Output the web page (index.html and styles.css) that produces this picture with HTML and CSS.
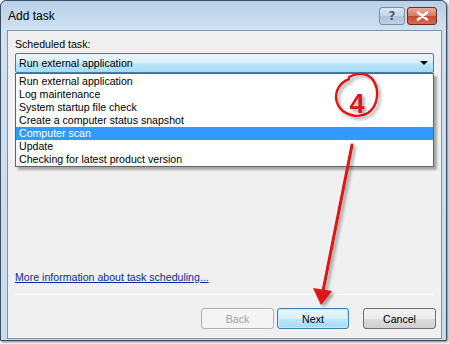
FILE: index.html
```html
<!DOCTYPE html>
<html lang="en">
<head>
  <meta charset="UTF-8" />
  <title>Add task</title>
  <link rel="stylesheet" href="styles.css">
</head>
<body>

  <div class="window" role="dialog" aria-label="Add task">
    <div class="titlebar">
      <span class="title">Add task</span>
      <button class="cap-btn help" aria-label="Help">?</button>
      <button class="cap-btn close" aria-label="Close">
        <svg width="13" height="10" viewBox="0 0 13 10"><path d="M2 1.5 L11 8.5 M11 1.5 L2 8.5" stroke="#fff" stroke-width="2.6" stroke-linecap="round"/></svg>
      </button>
    </div>

    <div class="client">
      <div class="label">Scheduled task:</div>
      <div class="combo-wrap">
        <div class="combo">
          <span>Run external application</span>
          <span class="arrow"></span>
        </div>
        <ul class="dropdown">
          <li>Run external application</li>
          <li>Log maintenance</li>
          <li>System startup file check</li>
          <li>Create a computer status snapshot</li>
          <li class="selected">Computer scan</li>
          <li>Update</li>
          <li>Checking for latest product version</li>
        </ul>
      </div>

      <div class="spacer"></div>

      <a href="#" class="info-link">More information about task scheduling...</a>
      <div class="separator"></div>

      <div class="buttons">
        <button class="btn back" disabled>Back</button>
        <button class="btn next">Next</button>
        <button class="btn cancel">Cancel</button>
      </div>
    </div>
  </div>

  <!-- step marker drawn over the dialog -->
  <svg class="annotation" width="449" height="344" viewBox="0 0 449 344">
    <defs>
      <filter id="shade" x="-20%" y="-20%" width="140%" height="140%">
        <feDropShadow dx="2.5" dy="2.5" stdDeviation="1.5" flood-color="#000" flood-opacity="0.35"/>
      </filter>
    </defs>
    <g filter="url(#shade)" fill="none" stroke="#e01212" stroke-linecap="round">
      <path d="M349 77 C358 72 368 73 373 80 C380 90 378 106 368 113 C358 119 343 115 338 105 C333 95 338 83 349 79" stroke-width="2.4"/>
      <path d="M352 145 L323 291" stroke-width="3"/>
    </g>
    <g filter="url(#shade)">
      <polygon points="321,305 313,288 332,291" fill="#e01212"/>
      <text x="357" y="113" class="step">4</text>
    </g>
  </svg>

</body>
</html>
```

FILE: styles.css
```css
* {
  box-sizing: border-box;
}

body {
  margin: 0;
  background: #ffffff;
  font-family: 'Liberation Sans', Arial, sans-serif;
  font-size: 10.6px;
  color: #000;
  position: relative;
  width: 449px;
  height: 344px;
  overflow: hidden;
}

.window {
  width: 447px;
  height: 341px;
  border: 1px solid #3b4d63;
  border-radius: 6px 6px 0 0;
  background: linear-gradient(to bottom, #b9d0e8, #cfe0f1 28px, #c6daee);
  padding: 0 4px 1px 6px;
  display: flex;
  flex-direction: column;
  box-shadow: 1px 1px 3px rgba(0, 0, 0, 0.55);
}

/* Title bar */
.titlebar {
  height: 29px;
  display: flex;
  align-items: flex-start;
}

.title {
  font-size: 12px;
  padding: 8px 0 0 1px;
  color: #000;
  flex: 1;
}

.cap-btn {
  margin-top: 6px;
  height: 18px;
  border-radius: 3px;
  padding: 0;
  display: flex;
  justify-content: center;
  align-items: center;
}

.help {
  width: 26px;
  border: 1px solid #7b8ea6;
  background: linear-gradient(to bottom, #dbe6f2, #c4d5e8 50%, #aec2d9 51%, #bdd0e4);
  color: #4f5f74;
  font-family: 'DejaVu Sans', sans-serif;
  font-size: 12px;
  font-weight: bold;
}

.close {
  width: 30px;
  margin-left: 2px;
  margin-right: 5px;
  border: 1px solid #6a2a22;
  background: linear-gradient(to bottom, #e9a99b, #d87a65 50%, #c44a33 51%, #d86a4e);
}

/* Client area */
.client {
  flex: 1;
  border: 1px solid #7f94ab;
  background: #f0f0f0;
  padding: 7px 7px 9px;
  display: flex;
  flex-direction: column;
}

.label {
  height: 13px;
  line-height: 13px;
  margin-bottom: 2px;
}

.combo-wrap {
  position: relative;
}

.combo {
  height: 20px;
  border: 1px solid #3c7fb1;
  border-radius: 2px;
  background: linear-gradient(to bottom, #eaf6fd, #d9f0fc 50%, #bee6fd 51%, #a7d9f5);
  display: flex;
  align-items: center;
  padding: 0 3px;
}

.combo span:first-child {
  flex: 1;
}

.arrow {
  width: 0;
  height: 0;
  border-left: 4px solid transparent;
  border-right: 4px solid transparent;
  border-top: 4px solid #000;
  margin-right: 2px;
}

/* Open list, lies over the dialog */
.dropdown {
  position: absolute;
  top: 100%;
  left: 0;
  right: 0;
  margin: 0;
  padding: 1px 0 0;
  list-style: none;
  background: #ffffff;
  border: 1px solid #646464;
  box-shadow: 3px 3px 2px rgba(0, 0, 0, 0.3);
}

.dropdown li {
  height: 13px;
  line-height: 13px;
  padding: 0 3px;
}

.dropdown li.selected {
  background: #3399ff;
  color: #ffffff;
}

.spacer {
  flex: 1;
}

.info-link {
  color: #0b2d99;
  text-decoration: underline;
  line-height: 13px;
  align-self: flex-start;
}

.separator {
  height: 1px;
  background: #a0a0a0;
  margin-top: 10px;
  border-bottom: 1px solid #ffffff;
}

.buttons {
  display: flex;
  justify-content: flex-end;
  margin-top: 13px;
  margin-right: -2px;
}

.btn {
  width: 73px;
  height: 21px;
  border: 1px solid #707070;
  border-radius: 3px;
  font-family: inherit;
  font-size: 10.6px;
  color: #000;
  background: linear-gradient(to bottom, #f2f2f2, #ebebeb 50%, #dddddd 51%, #cfcfcf);
  padding: 0;
}

.back {
  border-color: #adb2b5;
  background: #f4f4f4;
  color: #a0a0a0;
}

.next {
  width: 72px;
  margin-left: 3px;
  border-color: #3c7fb1;
  background: linear-gradient(to bottom, #eaf6fd, #d9f0fc 50%, #bee6fd 51%, #a7d9f5);
  box-shadow: inset 0 0 0 1px #c9e8fa;
}

.cancel {
  margin-left: 14px;
}

/* Red step marker */
.annotation {
  position: absolute;
  top: 0;
  left: 0;
  pointer-events: none;
}

.step {
  font-family: 'Liberation Sans', Arial, sans-serif;
  font-size: 27px;
  font-weight: bold;
  fill: #e01212;
  text-anchor: middle;
}
```
